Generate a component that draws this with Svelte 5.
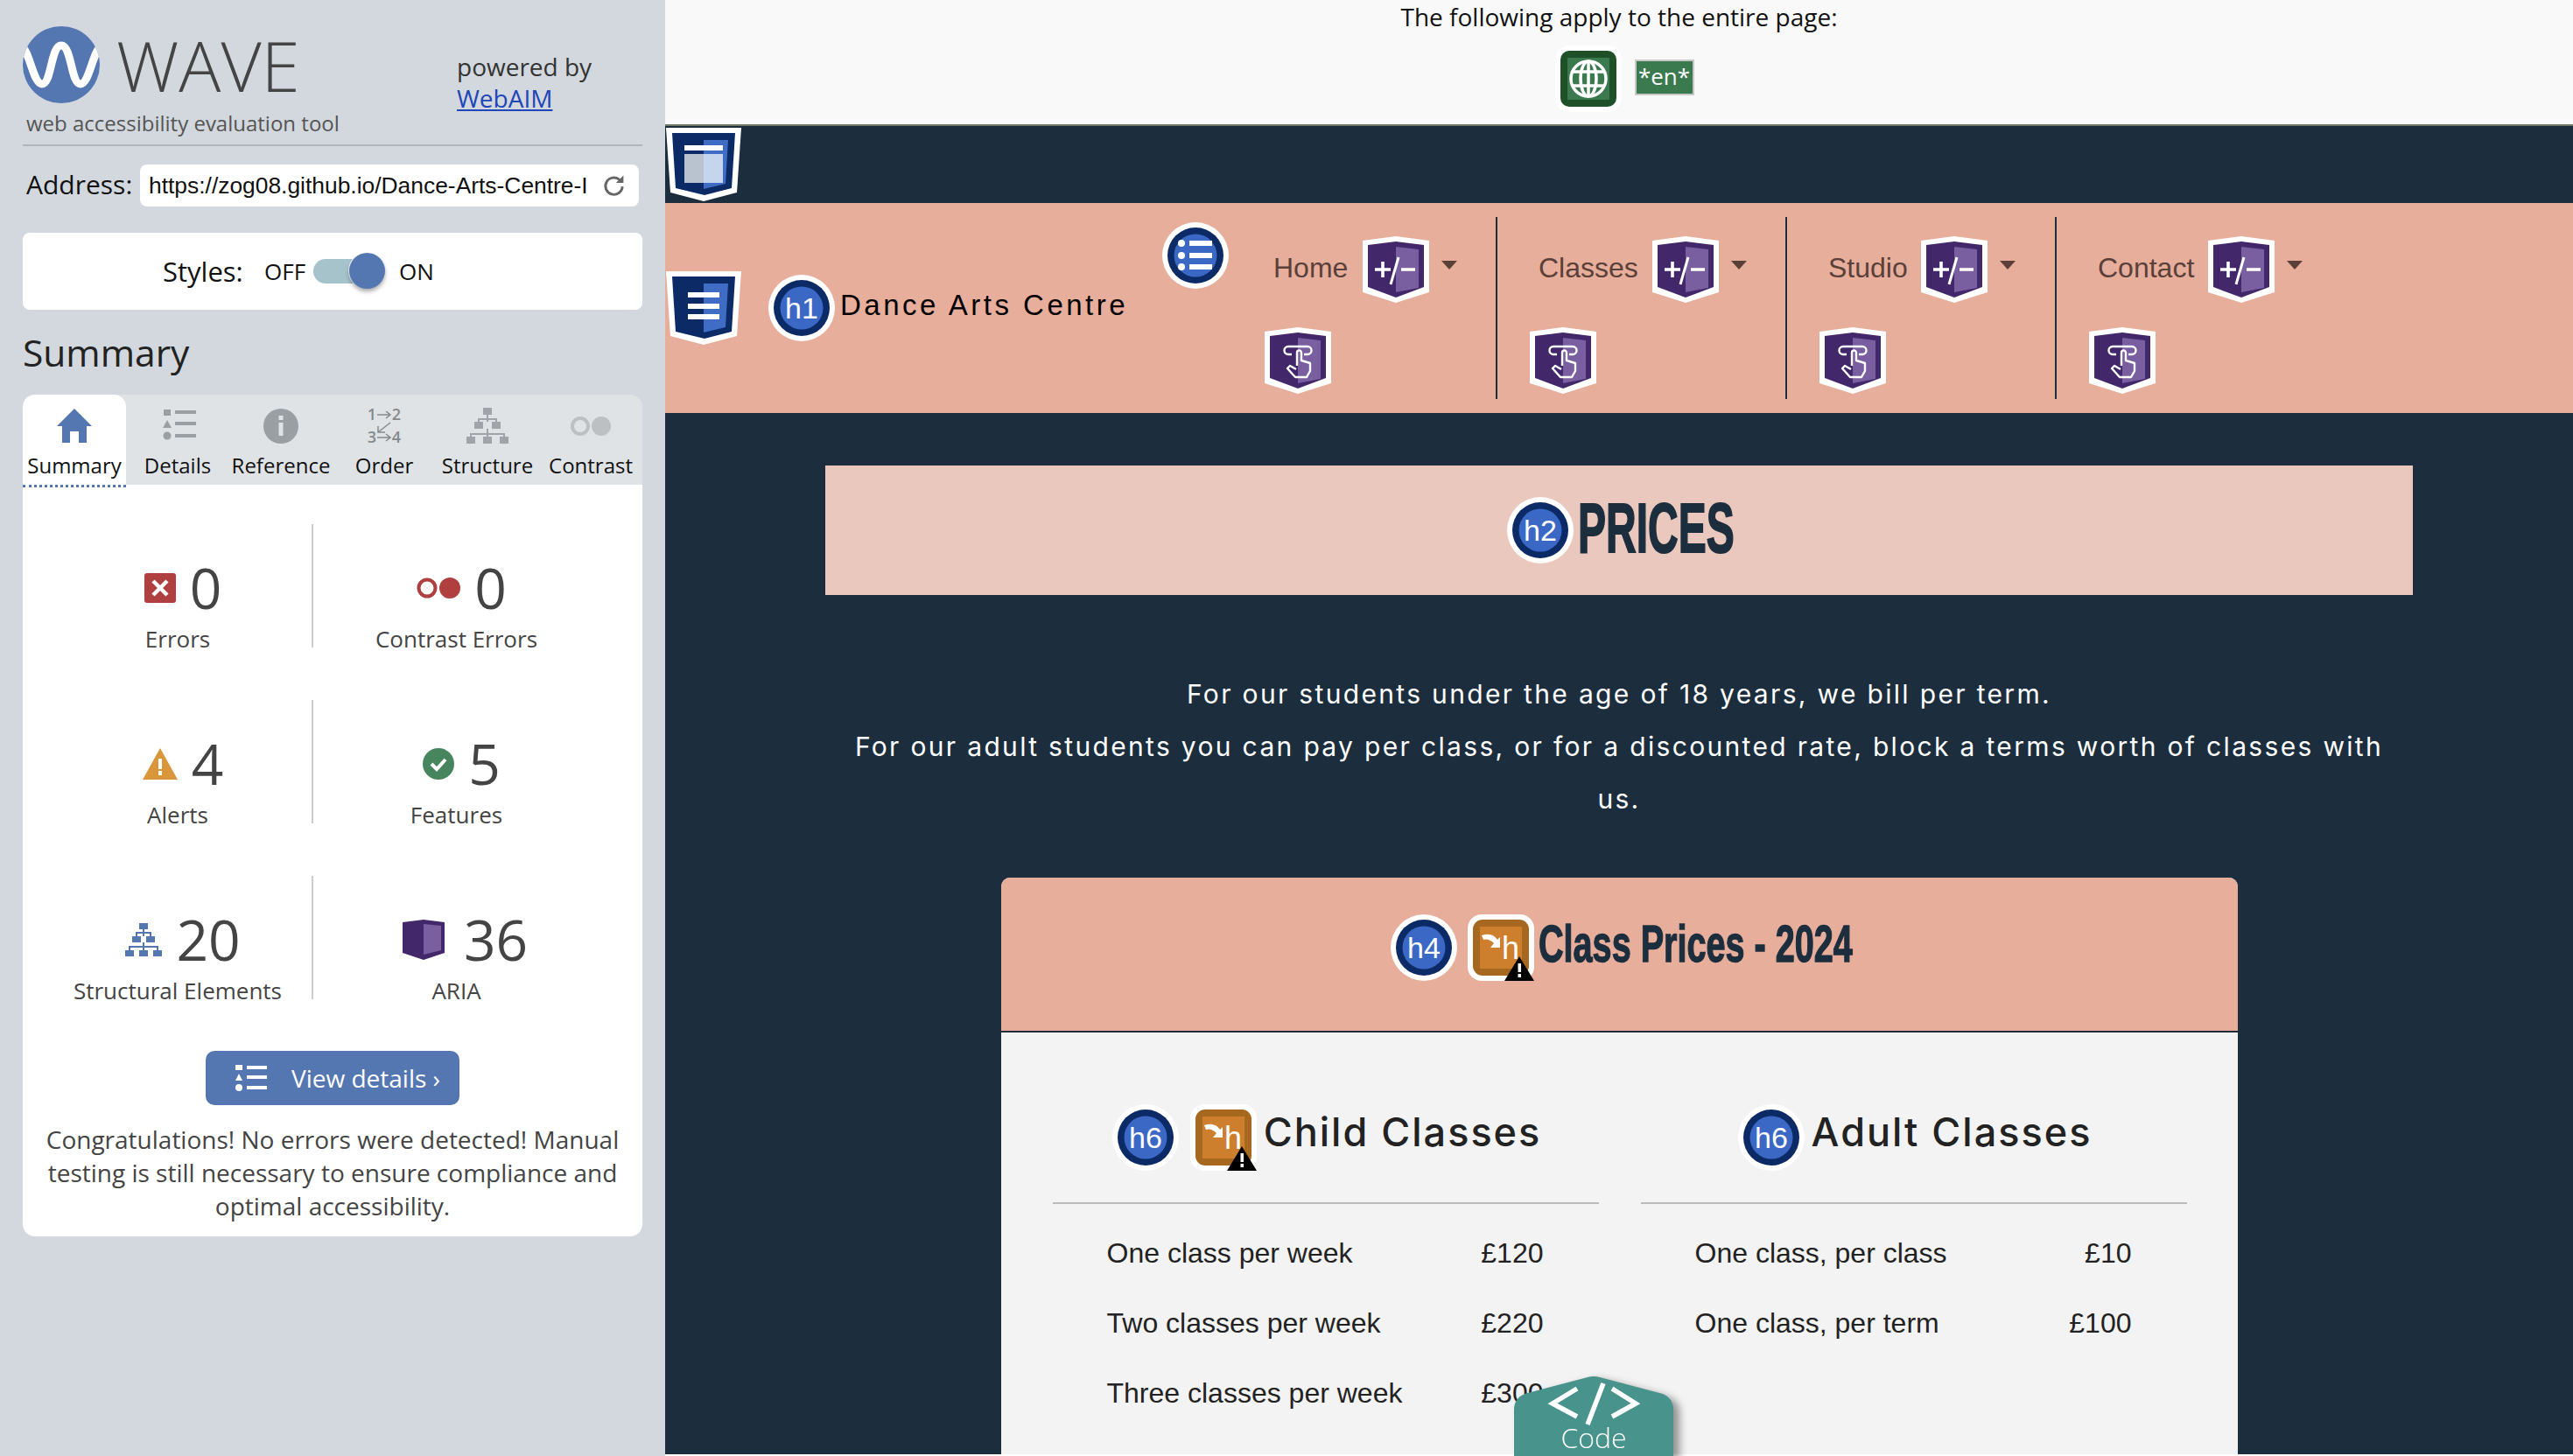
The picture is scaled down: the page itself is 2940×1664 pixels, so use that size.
<script>
  const navItems = [
    { label: 'Home', width: 303, gap: 17 },
    { label: 'Classes', width: 331, gap: 16 },
    { label: 'Studio', width: 308, gap: 15 },
    { label: 'Contact', width: 300, gap: 16 }
  ];
  const tabs = ['Summary', 'Details', 'Reference', 'Order', 'Structure', 'Contrast'];
  const childRows = [
    ['One class per week', '£120'],
    ['Two classes per week', '£220'],
    ['Three classes per week', '£300']
  ];
  const adultRows = [
    ['One class, per class', '£10'],
    ['One class, per term', '£100']
  ];
</script>

{#snippet badge(label)}
  <svg class="badge" viewBox="0 0 76 76" width="76" height="76">
    <circle cx="38" cy="38" r="38" fill="#fff" />
    <circle cx="38" cy="38" r="32" fill="#0b2a66" />
    <circle cx="38" cy="38" r="24.5" fill="#3a68c4" />
    {#if label}
      <text x="38" y="50" text-anchor="middle" class="badge-text">{label}</text>
    {:else}
      <circle cx="22" cy="24" r="4" fill="#fff" /><circle cx="22" cy="38" r="4" fill="#fff" /><circle cx="22" cy="51" r="4" fill="#fff" />
      <rect x="31" y="21" width="26" height="6" fill="#fff" /><rect x="31" y="35" width="26" height="6" fill="#fff" /><rect x="31" y="48" width="26" height="6" fill="#fff" />
    {/if}
  </svg>
{/snippet}

{#snippet aria(kind)}
  <svg class="badge" viewBox="0 0 76 76" width="76" height="76">
    <path d="M0 5L38 0L76 5V64L38 76L0 64Z" fill="#fff" />
    <path d="M6 10L38 6L70 10V58L38 70L6 58Z" fill="#42276b" />
    <path d="M38 12L64 15V59L38 64Z" fill="#795ea0" />
    {#if kind === 'plus'}
      <path d="M14 38H32M23 29V47M44 38H60" stroke="#fff" stroke-width="3.6" fill="none" />
      <path d="M41 24L32 55" stroke="#fff" stroke-width="3" fill="none" />
    {:else}
      <path d="M31 31H27a4.5 4.5 0 0 1 0-9H49a4.5 4.5 0 0 1 0 9H45" stroke="#fff" stroke-width="2.4" fill="none" />
      <path d="M37 44V29a2.5 2.5 0 0 1 5 0V38L52 41V50L48 57H35L26 47L29 44L36 48" stroke="#fff" stroke-width="2.4" fill="none" stroke-linejoin="round" />
    {/if}
  </svg>
{/snippet}

{#snippet headingAlert()}
  <svg class="badge" viewBox="0 0 76 76" width="76" height="76">
    <rect width="76" height="76" rx="16" fill="#fff" />
    <rect x="6" y="6" width="64" height="64" rx="11" fill="#a6671f" />
    <rect x="14" y="14" width="48" height="48" fill="#cd7f2e" />
    <path d="M16 24Q28 20 34 29L37 26V38H26L30 33Q24 27 18 29Z" fill="#fff" />
    <text x="49" y="51" text-anchor="middle" class="badge-text h-big">h</text>
    <path d="M42 76L59 48L76 76Z" fill="#000" />
    <rect x="57.500" y="56" width="3.500" height="10" fill="#fff" /><rect x="57.500" y="68" width="3.500" height="4" fill="#fff" />
  </svg>
{/snippet}

<div class="root">
  <aside class="side">
    <header class="head">
      <div class="brand">
        <div class="logo-row">
          <svg viewBox="0 0 88 88" width="88" height="88">
            <clipPath id="logo-clip"><circle cx="44" cy="44" r="44" /></clipPath>
            <circle cx="44" cy="44" r="44" fill="#5477b2" />
            <path d="M-2 22C8 28 12 66 22 66C33 66 32 22 44 22C56 22 55 66 66 66C76 66 80 28 90 22" fill="none" stroke="#fff" stroke-width="9" clip-path="url(#logo-clip)" />
          </svg>
          <span class="wave">WAVE</span>
        </div>
        <div class="tagline">web accessibility evaluation tool</div>
      </div>
      <div class="powered">powered by<br /><a href="#webaim">WebAIM</a></div>
    </header>

    <div class="address">
      <span class="addr-label">Address:</span>
      <div class="addr-input">
        <span class="addr-text">https://zog08.github.io/Dance-Arts-Centre-I</span>
        <svg viewBox="0 0 24 24" width="29" height="29"><path d="M20 12.500a8 8 0 1 1-2.600-6.300" fill="none" stroke="#666" stroke-width="2.400" /><path d="M21 2V9H14Z" fill="#666" /></svg>
      </div>
    </div>

    <div class="styles">
      <span class="styles-label">Styles:</span>
      <span class="onoff off">OFF</span>
      <span class="track"><span class="knob"></span></span>
      <span class="onoff">ON</span>
    </div>

    <h2 class="sum-title">Summary</h2>

    <nav class="tabs">
      {#each tabs as tab, i}
        <div class="tab" class:active={i === 0}>
          <svg viewBox="0 0 48 42" width="48" height="42" class="tab-icon">
            {#if i === 0}
              <path d="M24 1L44 21H38V40H29V27H19V40H10V21H4Z" fill="#5477b2" />
            {:else if i === 1}
              <rect x="8" y="2" width="8" height="7" fill="#9a9fa3" /><rect x="21" y="3" width="24" height="4" fill="#9a9fa3" />
              <path d="M12 14L17 23H7Z" fill="#9a9fa3" /><rect x="21" y="16" width="24" height="4" fill="#9a9fa3" />
              <circle cx="12" cy="32" r="4.500" fill="#9a9fa3" /><rect x="21" y="30" width="24" height="4" fill="#9a9fa3" />
            {:else if i === 2}
              <circle cx="24" cy="21" r="20" fill="#9a9fa3" />
              <rect x="21.500" y="17" width="5" height="15" fill="#dfe3e6" /><rect x="21.500" y="9" width="5" height="5" fill="#dfe3e6" />
            {:else if i === 3}
              <text x="10" y="14" text-anchor="middle" class="order-text">1</text>
              <text x="38" y="14" text-anchor="middle" class="order-text">2</text>
              <text x="10" y="40" text-anchor="middle" class="order-text">3</text>
              <text x="38" y="40" text-anchor="middle" class="order-text">4</text>
              <path d="M16 8H31M26 4L31 8L26 12M16 34H31M26 30L31 34L26 38M31 17L17 28M17 21V28H25" stroke="#85898d" stroke-width="1.500" fill="none" />
            {:else if i === 4}
              <g fill="#a0a4a8">
                <rect x="19" y="0" width="10" height="8" /><rect x="9" y="16" width="10" height="8" /><rect x="29" y="16" width="10" height="8" />
                <rect x="0" y="33" width="10" height="8" /><rect x="19" y="33" width="10" height="8" /><rect x="38" y="33" width="10" height="8" />
                <path d="M23 8h2v8h-2zM14 12h20v2H14zM13 12h2v4h-2zM33 12h2v4h-2zM4 29h40v2H4zM4 29h2v4H4zM23 24h2v9h-2zM42 29h2v4h-2z" />
              </g>
            {:else}
              <circle cx="12" cy="21" r="9" fill="none" stroke="#bcc0c3" stroke-width="4" /><circle cx="36" cy="21" r="11" fill="#bcc0c3" />
            {/if}
          </svg>
          <span class="tab-label">{tab}</span>
        </div>
      {/each}
    </nav>

    <section class="panel">
      <div class="stats">
        <div class="stat first">
          <div class="stat-top">
            <svg viewBox="0 0 36 34" width="36" height="34"><rect width="36" height="34" rx="3" fill="#b03f3f" /><path d="M10 9L26 25M26 9L10 25" stroke="#fff" stroke-width="4.500" /></svg>
            <span class="num">0</span>
          </div>
          <span class="stat-label">Errors</span>
        </div>
        <div class="stat">
          <div class="stat-top">
            <svg viewBox="0 0 50 24" width="50" height="24"><circle cx="12" cy="12" r="9.500" fill="none" stroke="#b03f3f" stroke-width="4" /><circle cx="38" cy="12" r="12" fill="#b03f3f" /></svg>
            <span class="num">0</span>
          </div>
          <span class="stat-label">Contrast Errors</span>
        </div>
        <div class="stat first">
          <div class="stat-top">
            <svg viewBox="0 0 40 36" width="40" height="36"><path d="M20 0L40 36H0Z" fill="#d9963a" /><rect x="18" y="12" width="4" height="12" fill="#fff" /><rect x="18" y="26" width="4" height="5" fill="#fff" /></svg>
            <span class="num">4</span>
          </div>
          <span class="stat-label">Alerts</span>
        </div>
        <div class="stat">
          <div class="stat-top">
            <svg viewBox="0 0 36 36" width="36" height="36"><circle cx="18" cy="18" r="18" fill="#47855f" /><path d="M10 18L16 24L26 13" fill="none" stroke="#fff" stroke-width="4" /></svg>
            <span class="num">5</span>
          </div>
          <span class="stat-label">Features</span>
        </div>
        <div class="stat first">
          <div class="stat-top">
            <svg viewBox="0 0 42 38" width="42" height="38"><g fill="#5477b2"><rect x="16" y="0" width="10" height="7" /><rect x="8" y="15" width="10" height="7" /><rect x="24" y="15" width="10" height="7" /><rect x="0" y="31" width="10" height="7" /><rect x="16" y="31" width="10" height="7" /><rect x="32" y="31" width="10" height="7" /><path d="M20 7h2v8h-2zM12 10h18v2H12zM12 10h2v5h-2zM28 10h2v5h-2zM4 26h34v2H4zM4 26h2v5H4zM20 22h2v9h-2zM36 26h2v5h-2z" /></g></svg>
            <span class="num">20</span>
          </div>
          <span class="stat-label">Structural Elements</span>
        </div>
        <div class="stat">
          <div class="stat-top aria-top">
            <svg viewBox="0 0 48 46" width="48" height="46"><path d="M0 3L24 0L48 3V38L24 46L0 38Z" fill="#42276b" /><path d="M24 5L44 7V35L24 40Z" fill="#795ea0" /></svg>
            <span class="num">36</span>
          </div>
          <span class="stat-label">ARIA</span>
        </div>
      </div>
      <button class="details-btn" type="button">
        <svg viewBox="0 0 36 30" width="36" height="30">
          <rect x="0" y="0" width="8" height="6" fill="#fff" /><rect x="13" y="1" width="23" height="4" fill="#fff" />
          <path d="M4 10L8 18H0Z" fill="#fff" /><rect x="13" y="12" width="23" height="4" fill="#fff" />
          <circle cx="4" cy="26" r="4" fill="#fff" /><rect x="13" y="24" width="23" height="4" fill="#fff" />
        </svg>
        <span>View details ›</span>
      </button>
      <p class="congrats">Congratulations! No errors were detected! Manual testing is still necessary to ensure compliance and optimal accessibility.</p>
    </section>
  </aside>

  <main class="main">
    <div class="page">
      <div class="topbar">
        <div class="top-text">The following apply to the entire page:</div>
        <div class="top-icons">
          <svg viewBox="0 0 76 76" width="76" height="76">
            <rect width="76" height="76" rx="16" fill="#fff" />
            <rect x="6" y="6" width="64" height="64" rx="10" fill="#1f5028" />
            <rect x="14" y="14" width="48" height="48" fill="#3a7a4e" />
            <g fill="none" stroke="#fff" stroke-width="3.500">
              <circle cx="38" cy="38" r="20" /><ellipse cx="38" cy="38" rx="9" ry="20" /><path d="M38 18V58M20 30H56M20 46H56" />
            </g>
          </svg>
          <span class="lang">*en*</span>
        </div>
      </div>

      <div class="strip">
        <svg viewBox="0 0 86 84" width="86" height="84">
          <path d="M0 0H86L81 74L43 84L5 74Z" fill="#fff" />
          <path d="M7 6H79L75 69L44 77L11 69Z" fill="#0b2a66" />
          <path d="M43 14H71L68 64L43 70Z" fill="#3f6cc4" />
          <rect x="21" y="20" width="44" height="6" fill="#fff" />
          <rect x="21" y="30" width="22" height="33" fill="#b9c2cf" />
          <rect x="43" y="30" width="22" height="33" fill="#c5d5ee" />
        </svg>
      </div>

      <div class="site-head">
        <svg class="nav-shield" viewBox="0 0 86 84" width="86" height="84">
          <path d="M0 0H86L81 74L43 84L5 74Z" fill="#fff" />
          <path d="M7 6H79L75 69L44 77L11 69Z" fill="#0b2a66" />
          <path d="M43 14H71L68 64L43 70Z" fill="#3f6cc4" />
          <rect x="25" y="24" width="36" height="6" fill="#fff" /><rect x="25" y="37" width="36" height="6" fill="#fff" /><rect x="25" y="49" width="36" height="6" fill="#fff" />
        </svg>
        <div class="site-brand">
          {@render badge('h1')}
          <h1 class="site-title">Dance Arts Centre</h1>
        </div>
        <div class="nav-icon">{@render badge('')}</div>
        <ul class="nav">
          {#each navItems as item, i}
            <li class="nav-item" class:rule={i < 3} style="width:{item.width}px">
              <div class="nav-row">
                <a class="nav-link" href="#{item.label}">{item.label}</a>
                <span class="nav-aria" style="margin-left:{item.gap}px">{@render aria('plus')}</span>
                <span class="caret"></span>
              </div>
              {@render aria('hand')}
            </li>
          {/each}
        </ul>
      </div>

      <div class="content">
        <div class="banner">
          {@render badge('h2')}
          <h2 class="prices">PRICES</h2>
        </div>
        <p class="intro">For our students under the age of 18 years, we bill per term.<br />For our adult students you can pay per class, or for a discounted rate, block a terms worth of classes with us.</p>

        <section class="card">
          <div class="card-head">
            {@render badge('h4')}
            {@render headingAlert()}
            <h4 class="card-title">Class Prices - 2024</h4>
          </div>
          <div class="card-body">
            <div class="col">
              <div class="col-head">
                {@render badge('h6')}
                {@render headingAlert()}
                <h6 class="col-title">Child Classes</h6>
              </div>
              {#each childRows as row}
                <div class="row"><span>{row[0]}</span><span>{row[1]}</span></div>
              {/each}
            </div>
            <div class="col">
              <div class="col-head">
                {@render badge('h6')}
                <h6 class="col-title">Adult Classes</h6>
              </div>
              {#each adultRows as row}
                <div class="row"><span>{row[0]}</span><span>{row[1]}</span></div>
              {/each}
            </div>
          </div>
        </section>
      </div>
    </div>

    <div class="code-tab">
      <svg viewBox="0 0 182 91" width="182" height="91">
        <path d="M0 38Q0 25 12 20L84 1Q91 -1 98 1L170 20Q182 25 182 38V91H0Z" fill="#48938b" />
        <path d="M72 14L44 31L72 46M112 14L139 31L112 46M102 8L84 55" fill="none" stroke="#fff" stroke-width="5.500" />
      </svg>
      <span class="code-label">Code</span>
    </div>
  </main>
</div>

<style>
  :global(body) { margin: 0; background: #fff; }
  .root { display: flex; width: 2940px; height: 1664px; overflow: hidden; font-family: "Open Sans", sans-serif; }
  .side { width: 760px; flex: none; height: 1664px; background: #d2d8dd; box-sizing: border-box; }

  .head { display: flex; margin: 0 26px; height: 167px; box-sizing: border-box; padding-top: 30px; border-bottom: 2px solid #b0b5ba; }
  .brand { width: 496px; }
  .logo-row { display: flex; align-items: center; height: 88px; }
  .wave { margin-left: 19px; font-size: 80px; line-height: 88px; font-weight: 300; color: #444; }
  .tagline { margin: 8px 0 0 4px; font-size: 24px; line-height: 30px; color: #555; }
  .powered { margin-top: 28px; font-size: 28px; line-height: 36px; color: #333; }
  .powered a { color: #2046b8; }

  .address { display: flex; align-items: center; margin: 21px 30px 0; height: 48px; }
  .addr-label { width: 130px; margin-top: -3px; font-size: 30px; color: #111; }
  .addr-input { display: flex; align-items: center; width: 570px; height: 48px; background: #fff; border-radius: 8px; box-sizing: border-box; padding: 0 14px 0 10px; justify-content: space-between; }
  .addr-text { width: 505px; overflow: hidden; white-space: nowrap; font-family: "Liberation Sans", sans-serif; font-size: 26.4px; color: #111; }

  .styles { display: flex; align-items: center; margin: 30px 26px 0; padding-left: 160px; height: 88px; background: #fff; border-radius: 8px; }
  .styles-label { font-size: 31px; color: #111; width: 116px; }
  .onoff { font-size: 26px; color: #111; }
  .off { width: 56px; }
  .track { display: block; position: relative; width: 72px; height: 28px; border-radius: 14px; background: #a6c3cc; margin-right: 26px; }
  .knob { position: absolute; right: -10px; top: -7px; width: 41px; height: 41px; border-radius: 50%; background: #5477b2; box-shadow: 0 3px 5px rgba(0,0,0,.35), 0 0 0 1px #fff; }

  .sum-title { margin: 22px 26px 0; font-size: 42.5px; line-height: 54px; font-weight: 400; color: #222; }

  .tabs { display: grid; grid-template-columns: repeat(6, 118px); margin: 21px 26px 0; height: 103px; background: #dfe3e6; border-radius: 14px 14px 0 0; }
  .tab { display: flex; flex-direction: column; align-items: center; box-sizing: border-box; padding-top: 15px; height: 103px; }
  .tab.active { background: #fff; border-radius: 14px 14px 0 0; border-bottom: 3px dotted #5477b2; height: 106px; }
  .tab-icon { display: block; }
  .tab-label { margin-top: 8px; font-size: 24px; line-height: 32px; white-space: nowrap; color: #111; }
  .order-text { font-family: "Open Sans", sans-serif; font-size: 18px; font-weight: 600; fill: #85898d; }

  .panel { margin: 0 26px; background: #fff; border-radius: 0 0 14px 14px; padding: 45px 0 15px; text-align: center; height: 859px; box-sizing: border-box; }
  .stats { display: grid; grid-template-columns: 332px 327px; row-gap: 60px; }
  .stat { display: flex; flex-direction: column; align-items: center; height: 141px; box-sizing: border-box; padding-top: 41px; }
  .stat.first { border-right: 2px solid #ccc; padding-left: 24px; }
  .stat-top { display: flex; align-items: center; gap: 16px; height: 64px; padding-left: 12px; }
  .aria-top { gap: 22px; padding-left: 20px; }
  .num { font-size: 64px; line-height: 64px; color: #444; }
  .stat-label { margin-top: 11px; font-size: 26px; line-height: 30px; color: #444; white-space: nowrap; }
  .details-btn { display: flex; align-items: center; width: 290px; height: 62px; margin: 59px auto 0; padding: 0 0 0 34px; gap: 28px; border: 0; border-radius: 10px; background: #5477b2; color: #fff; font-family: inherit; font-size: 28px; }
  .congrats { margin: 20px 20px 0; font-size: 28px; line-height: 38px; color: #444; }

  .main { position: relative; flex: 1; height: 1664px; background: #fff; overflow: hidden; }
  .page { height: 1662px; overflow: hidden; background: #1c2e3d; }
  .topbar { height: 144px; box-sizing: border-box; background: #f9f9f9; border-bottom: 2px solid #6f7768; text-align: center; }
  .top-text { padding-top: 1px; font-size: 28px; line-height: 36px; color: #111; }
  .top-icons { display: flex; justify-content: center; align-items: center; gap: 15px; margin-top: 15px; padding-left: 12px; }
  .lang { box-sizing: border-box; width: 68px; height: 41px; margin-top: -3px; background: #3a7a4e; border: 2px solid #c8c8c8; color: #fff; font-size: 26px; line-height: 35px; }

  .strip { height: 88px; padding: 2px 0 0 1px; box-sizing: border-box; }
  .site-head { display: flex; align-items: flex-start; height: 240px; background: #e8ae9c; }
  .nav-shield { flex: none; margin: 78px 0 0 1px; }
  .site-brand { display: flex; align-items: center; flex: none; width: 450px; margin: 82px 0 0 31px; }
  .site-title { margin: 0 0 6px 6px; font-family: "Liberation Sans", sans-serif; font-size: 33px; font-weight: 400; letter-spacing: 3.5px; color: #000; white-space: nowrap; }
  .nav-icon { flex: none; margin-top: 22px; width: 80px; }
  .nav { display: flex; list-style: none; margin: 16px 0 0; padding: 0; }
  .nav-item { display: flex; flex-direction: column; align-items: flex-start; box-sizing: border-box; height: 208px; padding: 22px 0 0 37px; }
  .nav-item.rule { border-right: 2px solid #1c2e3d; }
  .nav-row { display: flex; align-items: center; height: 76px; margin: 0 0 28px 10px; }
  .nav-link { font-family: "Liberation Sans", sans-serif; font-size: 32px; color: #5a4038; text-decoration: none; margin-top: -3px; }
  .nav-aria { display: block; height: 76px; }
  .caret { margin: -10px 0 0 14px; width: 0; height: 0; border-left: 9px solid transparent; border-right: 9px solid transparent; border-top: 10px solid #5a4038; }
  .badge { display: block; flex: none; }
  .badge-text { font-family: "Liberation Sans", sans-serif; font-size: 34px; fill: #fff; }
  .h-big { font-size: 36px; }

  .content { display: flex; flex-direction: column; align-items: center; }
  .banner { display: flex; align-items: center; justify-content: center; gap: 5px; box-sizing: border-box; width: 1814px; height: 148px; margin-top: 60px; padding-left: 3px; background: #ebc8bd; }
  .prices { width: 179px; margin: -4px 0 0; transform: scaleX(.6); transform-origin: left center; white-space: nowrap; font-family: "Liberation Sans", sans-serif; font-size: 80px; font-weight: 700; color: #1c2e3d; -webkit-text-stroke: 2px #1c2e3d; line-height: 1; }
  .intro { width: 1770px; margin: 83px 0 0; text-align: center; font-family: Inter, sans-serif; font-size: 30px; line-height: 60px; letter-spacing: 2.33px; color: #fff; }
  .card { width: 1413px; height: 720px; flex: none; margin-top: 60px; background: #f3f3f3; border-radius: 10px 10px 0 0; }
  .card-head { display: flex; justify-content: center; align-items: flex-start; gap: 12px; box-sizing: border-box; height: 177px; padding: 42px 0 0 10px; background: #e8ae9c; border-bottom: 2px solid #222b38; border-radius: 10px 10px 0 0; }
  .card-title { width: 363px; transform: scaleX(.66); transform-origin: left center; margin: -2px 0 0 -7px; font-family: "Liberation Sans", sans-serif; font-size: 60px; line-height: 72px; font-weight: 700; color: #1c2e3d; -webkit-text-stroke: 1.5px #1c2e3d; white-space: nowrap; }
  .card-body { display: flex; gap: 48px; padding: 82px 0 0 59px; }
  .col { width: 624px; }
  .col-head { display: flex; align-items: flex-start; justify-content: center; gap: 13px; height: 112px; padding-left: 3px; border-bottom: 2px solid #bbb; margin-bottom: 16px; }
  .col-title { margin: 2px 0 0 -5px; line-height: 60px; font-family: Inter, sans-serif; font-size: 45px; font-weight: 500; letter-spacing: 2px; color: #222; white-space: nowrap; }
  .row { display: flex; justify-content: space-between; height: 80px; align-items: center; padding: 0 63px 0 62px; font-family: "Liberation Sans", sans-serif; font-size: 32px; color: #222; }

  .code-tab { position: absolute; left: 970px; bottom: 0; width: 182px; height: 91px; filter: drop-shadow(7px 4px 5px rgba(0,0,0,.4)); }
  .code-tab svg { display: block; }
  .code-label { position: absolute; left: 0; right: 0; top: 50px; text-align: center; font-size: 32px; line-height: 40px; color: #fff; font-weight: 300; }
</style>
